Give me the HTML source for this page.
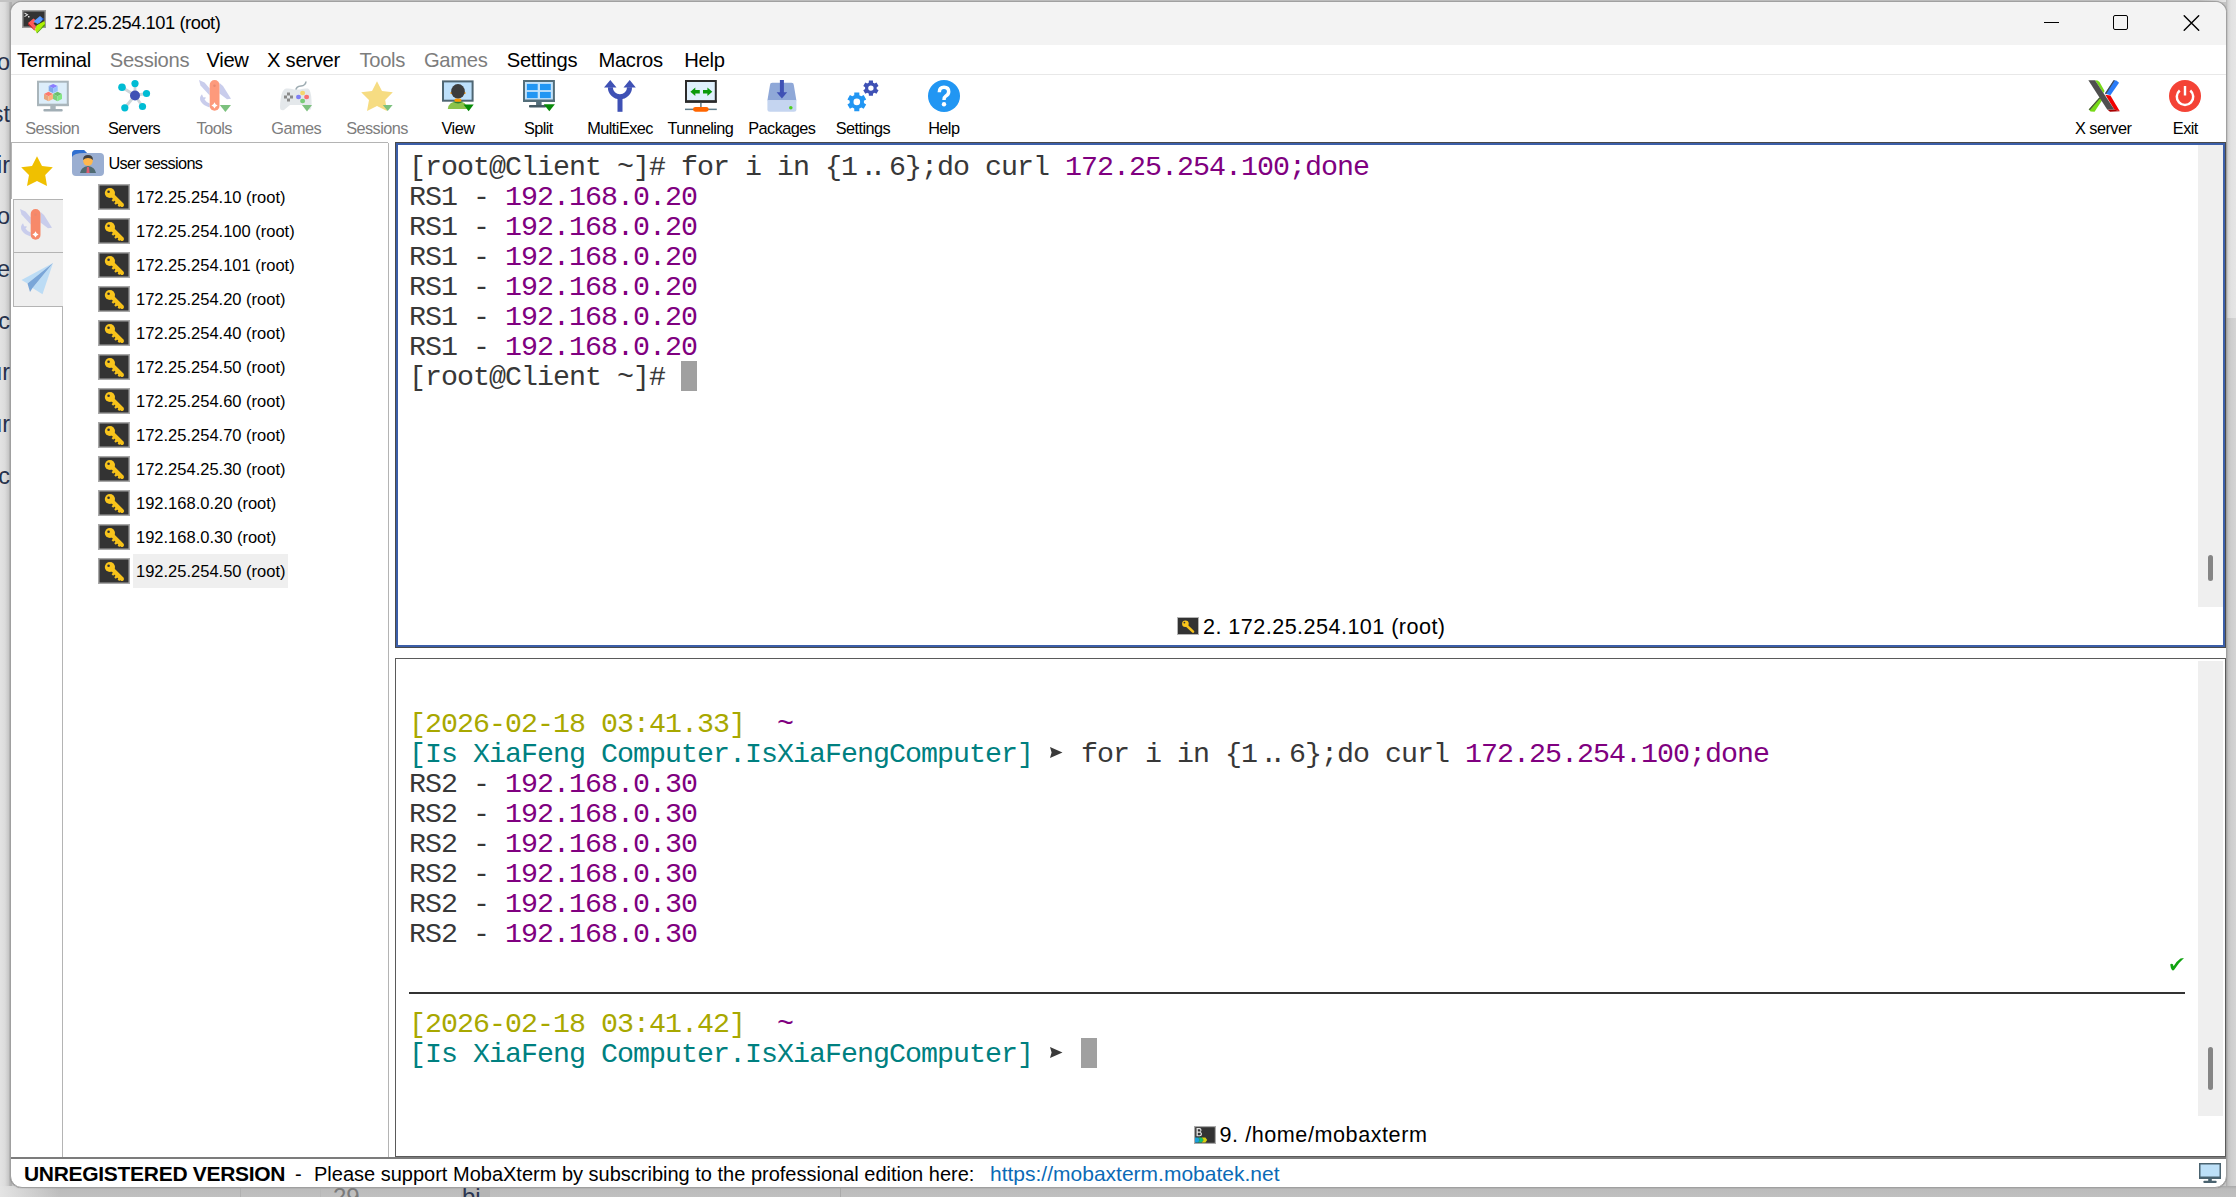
<!DOCTYPE html>
<html><head><meta charset="utf-8">
<style>
*{margin:0;padding:0;box-sizing:border-box}
html,body{width:2236px;height:1197px;overflow:hidden;background:#c4c4c4;font-family:"Liberation Sans",sans-serif;color:#000}
.a{position:absolute}
.t{position:absolute;white-space:pre;line-height:1}
svg{display:block}
</style></head><body>
<div class="a" style="left:0;top:0;width:12px;height:1197px;background:linear-gradient(to right,#e3e3e3 0px,#dcdcdc 5px,#c8c8c8 8.5px,#b0b0b0 10px)"></div>
<div class="a" style="left:0;top:0;width:2236px;height:2px;background:linear-gradient(to right,#c3c3c3 0px,#c3c3c3 2200px,#e6e6e6 2226px)"></div>
<div class="a" style="left:2226px;top:0;width:10px;height:318px;background:linear-gradient(to right,#b8b8b8 0px,#d4d4d4 2px,#e2e2e2 5px,#e6e6e6 10px)"></div>
<div class="a" style="left:2226px;top:318px;width:10px;height:879px;background:linear-gradient(to right,#a8a8a8 0px,#c0c0c0 2px,#cdcdcd 5px,#d4d4d4 10px)"></div>
<div class="a" style="left:0;top:1186px;width:2236px;height:11px;background:linear-gradient(to bottom,#a8a8a8 0px,#bcbcbc 3px,#c0c0c0 11px)"></div>
<div class="a" style="left:0;top:1186px;width:60px;height:11px;background:linear-gradient(to right,#e4e4e4,rgba(200,200,200,0))"></div>
<div class="a" style="left:240px;top:1188px;width:1px;height:9px;background:#b0b0b0;"></div>
<div class="a" style="left:320px;top:1188px;width:1px;height:9px;background:#b8b8b8;"></div>
<div class="a" style="left:840px;top:1188px;width:1px;height:9px;background:#aaaaaa;"></div>
<div class="a" style="left:461px;top:1188px;width:29px;height:9px;background:#b5b5b5;"></div>
<div class="t" style="left:10px;top:51.10px;font-size:23.5px;color:#26324c;font-weight:400;letter-spacing:0px;font-family:'Liberation Sans',sans-serif;transform:translateX(-100%);">o</div>
<div class="t" style="left:10px;top:103.10px;font-size:23.5px;color:#26324c;font-weight:400;letter-spacing:0px;font-family:'Liberation Sans',sans-serif;transform:translateX(-100%);">st</div>
<div class="t" style="left:10px;top:154.10px;font-size:23.5px;color:#26324c;font-weight:400;letter-spacing:0px;font-family:'Liberation Sans',sans-serif;transform:translateX(-100%);">ir</div>
<div class="t" style="left:10px;top:205.10px;font-size:23.5px;color:#26324c;font-weight:400;letter-spacing:0px;font-family:'Liberation Sans',sans-serif;transform:translateX(-100%);">o</div>
<div class="t" style="left:10px;top:258.10px;font-size:23.5px;color:#26324c;font-weight:400;letter-spacing:0px;font-family:'Liberation Sans',sans-serif;transform:translateX(-100%);">e</div>
<div class="t" style="left:10px;top:310.10px;font-size:23.5px;color:#26324c;font-weight:400;letter-spacing:0px;font-family:'Liberation Sans',sans-serif;transform:translateX(-100%);">sc</div>
<div class="t" style="left:10px;top:361.10px;font-size:23.5px;color:#26324c;font-weight:400;letter-spacing:0px;font-family:'Liberation Sans',sans-serif;transform:translateX(-100%);">ur</div>
<div class="t" style="left:10px;top:413.10px;font-size:23.5px;color:#26324c;font-weight:400;letter-spacing:0px;font-family:'Liberation Sans',sans-serif;transform:translateX(-100%);">ur</div>
<div class="t" style="left:10px;top:465.10px;font-size:23.5px;color:#26324c;font-weight:400;letter-spacing:0px;font-family:'Liberation Sans',sans-serif;transform:translateX(-100%);">nc</div>
<div class="t" style="left:333px;top:1185.18px;font-size:24px;color:#7a7a7a;font-weight:400;letter-spacing:0px;font-family:'Liberation Sans',sans-serif;">29</div>
<div class="t" style="left:462px;top:1185.18px;font-size:24px;color:#2a3550;font-weight:400;letter-spacing:0px;font-family:'Liberation Sans',sans-serif;">bi</div>
<div class="a" style="left:10px;top:1px;width:2217px;height:1187px;background:#fff;border:1px solid #a0a0a0;border-radius:12px;overflow:hidden;box-shadow:0 0 1px #777">
<div class="a" style="left:0;top:0;width:2215px;height:43px;background:#f3f3f3"></div>
</div>
<svg class="a" style="left:22px;top:10px;overflow:visible" width="24" height="24" viewBox="0 0 24 24">
<rect x="0.75" y="0.75" width="22.5" height="16.5" fill="#333" stroke="#9a9a9a" stroke-width="1.5"/>
<path d="M2.5 3 l3 1.8 l-3 1.8" stroke="#e0e0e0" stroke-width="1.1" fill="none"/><rect x="6" y="6" width="1.5" height="1.5" fill="#e0e0e0"/>
<path d="M6 13 L11.5 8.5 L14.5 11 L11.5 13.5 L14 16 L13 20 Z" fill="#ff5a5a"/>
<path d="M6 13 L6 14.5 L12.5 20.5 L13 20 Z" fill="#d01818"/>
<path d="M11.5 11.5 L18 6 L21.5 9 L18 12.5 L15.5 14 Z" fill="#5c9dff"/><path d="M19.5 8.5 l2 -0.5 l-0.5 2.5 z" fill="#1e5de0"/>
<path d="M13 20 L14.5 15.5 L17 14 L22.5 11 L23 14 L14.5 22.5 Z" fill="#b0f000"/>
<path d="M14.5 22.5 L23 14 L23 15.5 L15 23.5 Z" fill="#58b000"/>
</svg>
<div class="t" style="left:54px;top:13.81px;font-size:18.3px;color:#000;font-weight:400;letter-spacing:-0.45px;font-family:'Liberation Sans',sans-serif;">172.25.254.101 (root)</div>
<div class="a" style="left:2044px;top:22px;width:15px;height:1px;background:#000;"></div>
<div class="a" style="left:2113px;top:15px;width:15px;height:15px;border:1.3px solid #000;border-radius:2px"></div>
<svg class="a" style="left:2183px;top:15px;overflow:visible" width="17" height="16" viewBox="0 0 17 16"><path d="M1.2 0.8 L15.7 15.2 M15.7 0.8 L1.2 15.2" stroke="#000" stroke-width="1.45" stroke-linecap="round"/></svg>
<div class="a" style="left:11px;top:74px;width:2215px;height:1px;background:#e8e8e8;"></div>
<div class="t" style="left:54px;top:50.20px;font-size:20.2px;color:#000;font-weight:400;letter-spacing:-0.3px;font-family:'Liberation Sans',sans-serif;transform:translateX(-50%);">Terminal</div>
<div class="t" style="left:149.5px;top:50.20px;font-size:20.2px;color:#7d7d7d;font-weight:400;letter-spacing:-0.3px;font-family:'Liberation Sans',sans-serif;transform:translateX(-50%);">Sessions</div>
<div class="t" style="left:227.5px;top:50.20px;font-size:20.2px;color:#000;font-weight:400;letter-spacing:-0.3px;font-family:'Liberation Sans',sans-serif;transform:translateX(-50%);">View</div>
<div class="t" style="left:303.5px;top:50.20px;font-size:20.2px;color:#000;font-weight:400;letter-spacing:-0.3px;font-family:'Liberation Sans',sans-serif;transform:translateX(-50%);">X server</div>
<div class="t" style="left:382.3px;top:50.20px;font-size:20.2px;color:#7d7d7d;font-weight:400;letter-spacing:-0.3px;font-family:'Liberation Sans',sans-serif;transform:translateX(-50%);">Tools</div>
<div class="t" style="left:455.7px;top:50.20px;font-size:20.2px;color:#7d7d7d;font-weight:400;letter-spacing:-0.3px;font-family:'Liberation Sans',sans-serif;transform:translateX(-50%);">Games</div>
<div class="t" style="left:542px;top:50.20px;font-size:20.2px;color:#000;font-weight:400;letter-spacing:-0.3px;font-family:'Liberation Sans',sans-serif;transform:translateX(-50%);">Settings</div>
<div class="t" style="left:630.6px;top:50.20px;font-size:20.2px;color:#000;font-weight:400;letter-spacing:-0.3px;font-family:'Liberation Sans',sans-serif;transform:translateX(-50%);">Macros</div>
<div class="t" style="left:704.5px;top:50.20px;font-size:20.2px;color:#000;font-weight:400;letter-spacing:-0.3px;font-family:'Liberation Sans',sans-serif;transform:translateX(-50%);">Help</div>
<div class="a" style="left:11px;top:142px;width:377px;height:1px;background:#b4b4b4;"></div>
<div class="t" style="left:52.2px;top:120.10px;font-size:16.3px;color:#7d7d7d;font-weight:400;letter-spacing:-0.55px;font-family:'Liberation Sans',sans-serif;transform:translateX(-50%);">Session</div>
<div class="t" style="left:134px;top:120.10px;font-size:16.3px;color:#000;font-weight:400;letter-spacing:-0.55px;font-family:'Liberation Sans',sans-serif;transform:translateX(-50%);">Servers</div>
<div class="t" style="left:214.2px;top:120.10px;font-size:16.3px;color:#7d7d7d;font-weight:400;letter-spacing:-0.55px;font-family:'Liberation Sans',sans-serif;transform:translateX(-50%);">Tools</div>
<div class="t" style="left:296.2px;top:120.10px;font-size:16.3px;color:#7d7d7d;font-weight:400;letter-spacing:-0.55px;font-family:'Liberation Sans',sans-serif;transform:translateX(-50%);">Games</div>
<div class="t" style="left:377px;top:120.10px;font-size:16.3px;color:#7d7d7d;font-weight:400;letter-spacing:-0.55px;font-family:'Liberation Sans',sans-serif;transform:translateX(-50%);">Sessions</div>
<div class="t" style="left:458px;top:120.10px;font-size:16.3px;color:#000;font-weight:400;letter-spacing:-0.55px;font-family:'Liberation Sans',sans-serif;transform:translateX(-50%);">View</div>
<div class="t" style="left:538.4px;top:120.10px;font-size:16.3px;color:#000;font-weight:400;letter-spacing:-0.55px;font-family:'Liberation Sans',sans-serif;transform:translateX(-50%);">Split</div>
<div class="t" style="left:620.1px;top:120.10px;font-size:16.3px;color:#000;font-weight:400;letter-spacing:-0.55px;font-family:'Liberation Sans',sans-serif;transform:translateX(-50%);">MultiExec</div>
<div class="t" style="left:700.4px;top:120.10px;font-size:16.3px;color:#000;font-weight:400;letter-spacing:-0.55px;font-family:'Liberation Sans',sans-serif;transform:translateX(-50%);">Tunneling</div>
<div class="t" style="left:781.8px;top:120.10px;font-size:16.3px;color:#000;font-weight:400;letter-spacing:-0.55px;font-family:'Liberation Sans',sans-serif;transform:translateX(-50%);">Packages</div>
<div class="t" style="left:863px;top:120.10px;font-size:16.3px;color:#000;font-weight:400;letter-spacing:-0.55px;font-family:'Liberation Sans',sans-serif;transform:translateX(-50%);">Settings</div>
<div class="t" style="left:943.8px;top:120.10px;font-size:16.3px;color:#000;font-weight:400;letter-spacing:-0.55px;font-family:'Liberation Sans',sans-serif;transform:translateX(-50%);">Help</div>
<div class="t" style="left:2103.2px;top:120.10px;font-size:16.3px;color:#000;font-weight:400;letter-spacing:-0.55px;font-family:'Liberation Sans',sans-serif;transform:translateX(-50%);">X server</div>
<div class="t" style="left:2185.3px;top:120.10px;font-size:16.3px;color:#000;font-weight:400;letter-spacing:-0.55px;font-family:'Liberation Sans',sans-serif;transform:translateX(-50%);">Exit</div>
<svg class="a" style="left:37px;top:80px;overflow:visible" width="32" height="32" viewBox="0 0 32 32">
<rect x="1" y="1.7" width="29.8" height="23.4" fill="#ddeefa" stroke="#a9b5bb" stroke-width="2"/><rect x="0" y="23.7" width="31.8" height="2.4" fill="#a9b5bb"/><rect x="13.3" y="26" width="5.4" height="3" fill="#a9b5bb"/><rect x="6.4" y="29" width="19.3" height="2.5" rx="1" fill="#a1aeb5"/><path d="M11.7 6.1 L16.2 3.9 L20.7 6.1 L16.2 8.3 Z" fill="#8a7dff"/><path d="M11.7 6.1 L16.2 8.3 L16.2 13.3 L11.7 11.100000000000001 Z" fill="#7fa8ea"/><path d="M16.2 8.3 L20.7 6.1 L20.7 11.100000000000001 L16.2 13.3 Z" fill="#98c0ff"/><path d="M7 14.0 L11.5 11.8 L16 14.0 L11.5 16.200000000000003 Z" fill="#ff7a6e"/><path d="M7 14.0 L11.5 16.200000000000003 L11.5 21.200000000000003 L7 19.000000000000004 Z" fill="#e8a67e"/><path d="M11.5 16.200000000000003 L16 14.0 L16 19.000000000000004 L11.5 21.200000000000003 Z" fill="#ffb37e"/><path d="M16 14.0 L20.5 11.8 L25 14.0 L20.5 16.200000000000003 Z" fill="#6cbf6c"/><path d="M16 14.0 L20.5 16.200000000000003 L20.5 21.200000000000003 L16 19.000000000000004 Z" fill="#7ccf7c"/><path d="M20.5 16.200000000000003 L25 14.0 L25 19.000000000000004 L20.5 21.200000000000003 Z" fill="#84e884"/>
</svg>
<svg class="a" style="left:118px;top:80px;overflow:visible" width="32" height="32" viewBox="0 0 32 32">
<g stroke="#cfd6da" stroke-width="2.8"><line x1="17" y1="15.5" x2="4" y2="7.3"/><line x1="17" y1="15.5" x2="17" y2="3.5"/><line x1="17" y1="15.5" x2="28" y2="13.5"/><line x1="17" y1="15.5" x2="7" y2="27.5"/><line x1="17" y1="15.5" x2="24.5" y2="26.5"/></g>
<circle cx="17" cy="15.5" r="5" fill="#3f51b5"/>
<g fill="#00bcd4"><circle cx="4" cy="7.3" r="3.8"/><circle cx="17" cy="3.6" r="3.6"/><circle cx="28.5" cy="13.5" r="3.6"/><circle cx="6.8" cy="27.8" r="3.6"/><circle cx="24.5" cy="26.5" r="3.6"/></g>
</svg>
<svg class="a" style="left:198px;top:80px;overflow:visible" width="32" height="32" viewBox="0 0 32 32">
<path d="M1 0 L6.5 2.5 L11.7 8.5 L11.7 15.5 L2.5 5.5 Z" fill="#c9cdec"/>
<path d="M21.5 3 L25 6 L33 18.7 L29 19.2 L21.5 13.5 Z" fill="#c9cdec"/>
<path d="M4 14.2 Q1 17 2.5 21 Q5 25.5 11.7 27.5 L11.7 23.5 Q7.5 21.5 6.5 19.5 Q8 18.5 7.5 17 Q5.5 18 5 16.8 Z" fill="#c9cdec"/>
<rect x="11.7" y="0" width="9.8" height="30.8" rx="4.9" fill="#fd9a7c"/>
<circle cx="16.5" cy="5.7" r="1.2" fill="#e88a70"/>
<path d="M16.5 22.3 Q17.2 24.7 19.6 25.4 Q17.2 26.1 16.5 28.5 Q15.8 26.1 13.4 25.4 Q15.8 24.7 16.5 22.3 Z" fill="#fff"/>
<path d="M21.8 25 h11.2 l-5.6 7 z" fill="#7cc17e"/></svg>
<svg class="a" style="left:280px;top:80px;overflow:visible" width="32" height="32" viewBox="0 0 32 32">
<path d="M16 10 Q16 6.5 21 6 Q25.5 5.5 26 1.5" stroke="#9eacb2" stroke-width="1.6" fill="none"/>
<path d="M6 8.5 Q10 8 14 9.5 H20 Q24 8 28 8.5 Q31 10 31.5 20 Q32 29 30 30 L22 25 H10 L4 30 Q0 31 0 27 Q0.5 10 6 8.5 Z" fill="#e4e8eb"/>
<g fill="#8a8a8a"><rect x="7" y="12.5" width="3" height="3"/><rect x="4" y="15.5" width="3" height="3"/><rect x="10" y="15.5" width="3" height="3"/><rect x="7" y="18.5" width="3" height="3"/></g>
<ellipse cx="22.6" cy="13" rx="2.5" ry="2.2" fill="#f5d76e"/><ellipse cx="18.5" cy="17" rx="2.5" ry="2.2" fill="#7f7ff5"/>
<ellipse cx="26.6" cy="17" rx="2.5" ry="2.2" fill="#f87272"/><ellipse cx="22.6" cy="21" rx="2.5" ry="2.2" fill="#78cc78"/>
<path d="M22 25 h10 l-5 6.5 z" fill="#7cc17e"/>
</svg>
<svg class="a" style="left:361px;top:80px;overflow:visible" width="32" height="32" viewBox="0 0 32 32"><path d="M16 1.2 L21 11 L31.8 12.2 L24.2 20 L26 31 L16 26 L6 31 L8 20 L0.2 12.2 L11 11 Z" fill="#f6dc82"/><path d="M21.8 25 h9.8 l-4.9 6 z" fill="#7cc17e"/></svg>
<svg class="a" style="left:442px;top:80px;overflow:visible" width="32" height="32" viewBox="0 0 32 32">
<rect x="1" y="1.4" width="29.6" height="19.3" fill="#bde0fb" stroke="#4f6673" stroke-width="2"/>
<path d="M5.8 29 Q6.5 21.5 16 21 Q25 21.5 25 29 Z" fill="#8bc34a"/>
<path d="M11 21.8 Q16 25 21 21.8 Q16 20.5 11 21.8 Z" fill="#2e7d32"/>
<rect x="12.5" y="18.5" width="6.8" height="3.2" rx="1.5" fill="#ff9800"/>
<circle cx="9.3" cy="13" r="1" fill="#ff9800"/><circle cx="22.7" cy="13" r="1" fill="#ff9800"/>
<ellipse cx="16" cy="11.3" rx="6.8" ry="7.3" fill="#3c3c3c"/>
<path d="M21.5 24.5 h10.2 l-5.1 6.7 z" fill="#078c07"/>
</svg>
<svg class="a" style="left:523px;top:80px;overflow:visible" width="32" height="32" viewBox="0 0 32 32">
<rect x="1" y="1" width="29.9" height="20" fill="#c3e3fb" stroke="#546e7a" stroke-width="2"/>
<rect x="0" y="19.5" width="31.9" height="2.5" fill="#546e7a"/>
<g fill="#2196f3"><rect x="3.9" y="3.9" width="10.8" height="6.2"/><rect x="17" y="3.9" width="10.8" height="6.2"/><rect x="3.9" y="11.9" width="10.8" height="6.2"/><rect x="17" y="11.9" width="10.8" height="6.2"/></g>
<rect x="13.1" y="22" width="5.5" height="3.2" fill="#546e7a"/><rect x="6" y="25" width="17" height="2.6" rx="0.8" fill="#455a64"/>
<path d="M20.7 24.2 h11.2 l-5.6 7.1 z" fill="#098a09"/>
</svg>
<svg class="a" style="left:604px;top:80px;overflow:visible" width="32" height="32" viewBox="0 0 32 32">
<path d="M6.35 7.2 A9.6 9.6 0 0 0 25.55 7.2" stroke="#3f51b5" stroke-width="5" fill="none"/>
<rect x="13.5" y="16" width="5" height="15.8" fill="#3f51b5"/>
<path d="M0 7.6 L6.3 0 L12.5 7.6 Z M19.5 7.6 L25.7 0 L31.8 7.6 Z" fill="#3f51b5"/>
</svg>
<svg class="a" style="left:685px;top:80px;overflow:visible" width="32" height="32" viewBox="0 0 32 32">
<rect x="1" y="1" width="29.8" height="20.5" fill="#dff0fc" stroke="#2b2b2b" stroke-width="2"/>
<rect x="0" y="20.3" width="31.8" height="2.5" fill="#2b2b2b"/>
<path d="M5.4 11.65 L10.3 7.4 V9.9 H14.8 V13.4 H10.3 V15.9 Z" fill="#0a9a0a"/>
<path d="M27.3 11.65 L22.4 7.4 V9.9 H18 V13.4 H22.4 V15.9 Z" fill="#0a9a0a"/>
<rect x="15.2" y="22.8" width="1.4" height="4.2" fill="#546e7a"/>
<rect x="0" y="28.6" width="31.8" height="1.5" fill="#607d8b"/>
<rect x="8" y="26.9" width="15.7" height="4.9" rx="2.45" fill="#ff6600"/>
</svg>
<svg class="a" style="left:767px;top:80px;overflow:visible" width="32" height="32" viewBox="0 0 32 32">
<path d="M3 5 Q3 2.7 5.3 2.7 H24.5 Q26.8 2.7 26.8 5 L29.4 20.4 H0.4 Z" fill="#8fa8d8"/>
<path d="M0.4 20.2 H29.4 V29.3 Q29.4 31.8 26.9 31.8 H2.9 Q0.4 31.8 0.4 29.3 Z" fill="#c5d5f0"/>
<circle cx="23.8" cy="27.7" r="1.8" fill="#50d020"/>
<rect x="12.9" y="0" width="4" height="13" fill="#3f51b5"/><path d="M9.6 12.3 H20.2 L14.9 18.4 Z" fill="#3f51b5"/>
</svg>
<svg class="a" style="left:847px;top:80px;overflow:visible" width="32" height="32" viewBox="0 0 32 32"><polygon points="16.89,23.02 19.17,24.41 16.66,28.76 14.32,27.48 13.39,28.12 12.37,28.60 12.31,31.27 7.29,31.27 7.23,28.60 6.21,28.12 5.28,27.48 2.94,28.76 0.43,24.41 2.71,23.02 2.62,21.90 2.71,20.78 0.43,19.39 2.94,15.04 5.28,16.32 6.21,15.68 7.23,15.20 7.29,12.53 12.31,12.53 12.37,15.20 13.39,15.68 14.32,16.32 16.66,15.04 19.17,19.39 16.89,20.78 16.98,21.90" fill="#2196f3"/><circle cx="9.8" cy="21.9" r="3.3" fill="#fff"/><polygon points="29.67,9.01 31.53,10.14 29.49,13.69 27.58,12.64 26.82,13.16 26.00,13.56 25.94,15.73 21.86,15.73 21.80,13.56 20.98,13.16 20.22,12.64 18.31,13.69 16.27,10.14 18.13,9.01 18.05,8.10 18.13,7.19 16.27,6.06 18.31,2.51 20.22,3.56 20.98,3.04 21.80,2.64 21.86,0.47 25.94,0.47 26.00,2.64 26.82,3.04 27.58,3.56 29.49,2.51 31.53,6.06 29.67,7.19 29.75,8.10" fill="#3f51b5"/><circle cx="23.9" cy="8.1" r="2.7" fill="#fff"/></svg>
<svg class="a" style="left:928px;top:80px;overflow:visible" width="32" height="32" viewBox="0 0 32 32">
<circle cx="16" cy="16" r="16" fill="#2196f3"/>
<path d="M11.3 12.3 Q11.3 7.3 16 7.3 Q20.7 7.3 20.7 11.8 Q20.7 14.6 17.6 16.2 Q16 17.2 16 20" stroke="#fff" stroke-width="3.5" fill="none"/>
<circle cx="16" cy="24.3" r="2.2" fill="#fff"/>
</svg>
<svg class="a" style="left:2088px;top:80px;overflow:visible" width="32" height="32" viewBox="0 0 32 32">
<path d="M0.7 29.4 L11.4 17.6 L14.9 19.1 L6.6 31.7 L2.6 31.4 Z" fill="#77d918"/>
<path d="M0.7 29.4 L11.4 17.6 L12.4 18 L2 30 Z" fill="#4a4a4a"/>
<path d="M25.6 0.24 L28.3 0.6 L31.05 2.8 L22.4 15.2 L16.9 13.6 Z" fill="#2a7cf8"/>
<path d="M25.6 0.24 L26.9 0.3 L18.2 14 L16.9 13.6 Z" fill="#4a4a4a"/>
<path d="M17.3 14.8 L22.4 15.6 L31.8 31.3 L26.3 29.4 Z" fill="#f00000"/>
<path d="M19.2 29.4 L26.3 29.4 L31.8 31.3 L22 31.8 Z" fill="#a80000"/>
<path d="M7 0.24 L9.5 0.6 L11.5 2 L16.6 11 L15.3 13 Z" fill="#77d918"/>
<path d="M0.35 0.24 L7 0.24 L26.3 29.4 L19.2 29.4 Z" fill="#4f4f4f"/>
</svg>
<svg class="a" style="left:2169px;top:80px;overflow:visible" width="32" height="32" viewBox="0 0 32 32">
<circle cx="16" cy="16" r="16" fill="#f44336"/>
<path d="M10.73 10.52 A8.2 8.2 0 1 0 21.27 10.52" stroke="#fff" stroke-width="2.5" fill="none"/>
<rect x="14.8" y="6" width="2.4" height="9.5" fill="#fff"/>
</svg>
<div class="a" style="left:11px;top:143px;width:1px;height:56px;background:#b4b4b4;"></div>
<div class="a" style="left:62px;top:199px;width:1px;height:958px;background:#b4b4b4;"></div>
<svg class="a" style="left:21px;top:155px;overflow:visible" width="32" height="32" viewBox="0 0 32 32"><path d="M16 1.2 L21 11 L31.8 12.2 L24.2 20 L26 31 L16 26 L6 31 L8 20 L0.2 12.2 L11 11 Z" fill="#f0c000"/></svg>
<div class="a" style="left:13px;top:199px;width:50px;height:54px;background:#efefef;border:1px solid #b4b4b4;border-right:none"></div>
<div class="a" style="left:13px;top:252px;width:50px;height:55px;background:#efefef;border:1px solid #b4b4b4;border-right:none"></div>
<svg class="a" style="left:19px;top:209px;overflow:visible" width="32" height="32" viewBox="0 0 32 32">
<path d="M1 0 L6.5 2.5 L11.7 8.5 L11.7 15.5 L2.5 5.5 Z" fill="#c9cdec"/>
<path d="M21.5 3 L25 6 L33 18.7 L29 19.2 L21.5 13.5 Z" fill="#c9cdec"/>
<path d="M4 14.2 Q1 17 2.5 21 Q5 25.5 11.7 27.5 L11.7 23.5 Q7.5 21.5 6.5 19.5 Q8 18.5 7.5 17 Q5.5 18 5 16.8 Z" fill="#c9cdec"/>
<rect x="11.7" y="0" width="9.8" height="30.8" rx="4.9" fill="#f7896a"/>
<circle cx="16.5" cy="5.7" r="1.2" fill="#e88a70"/>
<path d="M16.5 22.3 Q17.2 24.7 19.6 25.4 Q17.2 26.1 16.5 28.5 Q15.8 26.1 13.4 25.4 Q15.8 24.7 16.5 22.3 Z" fill="#fff"/>
</svg>
<svg class="a" style="left:21px;top:263px;overflow:visible" width="32" height="32" viewBox="0 0 32 32">
<path d="M0.5 17 L32 0 L6.5 20.5 Z" fill="#bcdcf5"/>
<path d="M32 0 L21.5 31.3 L11.5 25 Z" fill="#bcdcf5"/>
<path d="M6.5 20.5 L32 0 L11.5 25 L9 29 Z" fill="#7aa6d8"/>
</svg>
<div class="a" style="left:388px;top:143px;width:1px;height:1014px;background:#b4b4b4;"></div>
<svg class="a" style="left:72px;top:150px;overflow:visible" width="32" height="26" viewBox="0 0 32 26">
<path d="M0 4 Q0 0 4 0 H12 L15 3 H28 Q32 3 32 7 V22 Q32 26 28 26 H4 Q0 26 0 22 Z" fill="#9aaed1"/>
<path d="M0 4 Q0 0 4 0 H12 L15 3 H12 Q2 3 0 7 Z" fill="#2f6fd0"/>
<path d="M8 23 Q9 17 16 16 Q23 17 24 23 Z" fill="#4f6b72"/>
<path d="M15 17 h2 l0.6 6 h-3.2 z" fill="#e05a6e"/>
<circle cx="16" cy="11" r="4.8" fill="#ffb74d"/>
<path d="M11 10 Q11 5 16 5 Q21 5 21 10 Q19 8 16 8 Q13 8 11 10 Z" fill="#424242"/>
</svg>
<div class="t" style="left:108.5px;top:155.20px;font-size:16.3px;color:#000;font-weight:400;letter-spacing:-0.65px;font-family:'Liberation Sans',sans-serif;">User sessions</div>
<svg class="a" style="left:98px;top:184px;overflow:visible" width="32" height="26" viewBox="0 0 32 26"><rect x="0.75" y="0.75" width="30.5" height="24.5" fill="#333" stroke="#a8a8a8" stroke-width="1.5"/>
<path d="M12 9 L24 21" stroke="#f7c21a" stroke-width="4" stroke-linecap="round"/>
<circle cx="11.9" cy="9" r="5.1" fill="#f9c51c"/><circle cx="10.6" cy="7.8" r="1.3" fill="#333"/>
<path d="M15.2 14.6 L13.6 16.2 L15.2 17.8 L16.4 16.6 L17.6 17.8 L16.2 19.2 L17.8 20.8 L19.2 19.4 L20.4 20.6 L19.6 21.6 L21.2 23 L24 20.4 Z" fill="#f7c21a"/></svg>
<div class="t" style="left:136px;top:189.03px;font-size:16.5px;color:#000;font-weight:400;letter-spacing:0px;font-family:'Liberation Sans',sans-serif;">172.25.254.10 (root)</div>
<svg class="a" style="left:98px;top:218px;overflow:visible" width="32" height="26" viewBox="0 0 32 26"><rect x="0.75" y="0.75" width="30.5" height="24.5" fill="#333" stroke="#a8a8a8" stroke-width="1.5"/>
<path d="M12 9 L24 21" stroke="#f7c21a" stroke-width="4" stroke-linecap="round"/>
<circle cx="11.9" cy="9" r="5.1" fill="#f9c51c"/><circle cx="10.6" cy="7.8" r="1.3" fill="#333"/>
<path d="M15.2 14.6 L13.6 16.2 L15.2 17.8 L16.4 16.6 L17.6 17.8 L16.2 19.2 L17.8 20.8 L19.2 19.4 L20.4 20.6 L19.6 21.6 L21.2 23 L24 20.4 Z" fill="#f7c21a"/></svg>
<div class="t" style="left:136px;top:223.03px;font-size:16.5px;color:#000;font-weight:400;letter-spacing:0px;font-family:'Liberation Sans',sans-serif;">172.25.254.100 (root)</div>
<svg class="a" style="left:98px;top:252px;overflow:visible" width="32" height="26" viewBox="0 0 32 26"><rect x="0.75" y="0.75" width="30.5" height="24.5" fill="#333" stroke="#a8a8a8" stroke-width="1.5"/>
<path d="M12 9 L24 21" stroke="#f7c21a" stroke-width="4" stroke-linecap="round"/>
<circle cx="11.9" cy="9" r="5.1" fill="#f9c51c"/><circle cx="10.6" cy="7.8" r="1.3" fill="#333"/>
<path d="M15.2 14.6 L13.6 16.2 L15.2 17.8 L16.4 16.6 L17.6 17.8 L16.2 19.2 L17.8 20.8 L19.2 19.4 L20.4 20.6 L19.6 21.6 L21.2 23 L24 20.4 Z" fill="#f7c21a"/></svg>
<div class="t" style="left:136px;top:257.03px;font-size:16.5px;color:#000;font-weight:400;letter-spacing:0px;font-family:'Liberation Sans',sans-serif;">172.25.254.101 (root)</div>
<svg class="a" style="left:98px;top:286px;overflow:visible" width="32" height="26" viewBox="0 0 32 26"><rect x="0.75" y="0.75" width="30.5" height="24.5" fill="#333" stroke="#a8a8a8" stroke-width="1.5"/>
<path d="M12 9 L24 21" stroke="#f7c21a" stroke-width="4" stroke-linecap="round"/>
<circle cx="11.9" cy="9" r="5.1" fill="#f9c51c"/><circle cx="10.6" cy="7.8" r="1.3" fill="#333"/>
<path d="M15.2 14.6 L13.6 16.2 L15.2 17.8 L16.4 16.6 L17.6 17.8 L16.2 19.2 L17.8 20.8 L19.2 19.4 L20.4 20.6 L19.6 21.6 L21.2 23 L24 20.4 Z" fill="#f7c21a"/></svg>
<div class="t" style="left:136px;top:291.03px;font-size:16.5px;color:#000;font-weight:400;letter-spacing:0px;font-family:'Liberation Sans',sans-serif;">172.25.254.20 (root)</div>
<svg class="a" style="left:98px;top:320px;overflow:visible" width="32" height="26" viewBox="0 0 32 26"><rect x="0.75" y="0.75" width="30.5" height="24.5" fill="#333" stroke="#a8a8a8" stroke-width="1.5"/>
<path d="M12 9 L24 21" stroke="#f7c21a" stroke-width="4" stroke-linecap="round"/>
<circle cx="11.9" cy="9" r="5.1" fill="#f9c51c"/><circle cx="10.6" cy="7.8" r="1.3" fill="#333"/>
<path d="M15.2 14.6 L13.6 16.2 L15.2 17.8 L16.4 16.6 L17.6 17.8 L16.2 19.2 L17.8 20.8 L19.2 19.4 L20.4 20.6 L19.6 21.6 L21.2 23 L24 20.4 Z" fill="#f7c21a"/></svg>
<div class="t" style="left:136px;top:325.03px;font-size:16.5px;color:#000;font-weight:400;letter-spacing:0px;font-family:'Liberation Sans',sans-serif;">172.25.254.40 (root)</div>
<svg class="a" style="left:98px;top:354px;overflow:visible" width="32" height="26" viewBox="0 0 32 26"><rect x="0.75" y="0.75" width="30.5" height="24.5" fill="#333" stroke="#a8a8a8" stroke-width="1.5"/>
<path d="M12 9 L24 21" stroke="#f7c21a" stroke-width="4" stroke-linecap="round"/>
<circle cx="11.9" cy="9" r="5.1" fill="#f9c51c"/><circle cx="10.6" cy="7.8" r="1.3" fill="#333"/>
<path d="M15.2 14.6 L13.6 16.2 L15.2 17.8 L16.4 16.6 L17.6 17.8 L16.2 19.2 L17.8 20.8 L19.2 19.4 L20.4 20.6 L19.6 21.6 L21.2 23 L24 20.4 Z" fill="#f7c21a"/></svg>
<div class="t" style="left:136px;top:359.03px;font-size:16.5px;color:#000;font-weight:400;letter-spacing:0px;font-family:'Liberation Sans',sans-serif;">172.25.254.50 (root)</div>
<svg class="a" style="left:98px;top:388px;overflow:visible" width="32" height="26" viewBox="0 0 32 26"><rect x="0.75" y="0.75" width="30.5" height="24.5" fill="#333" stroke="#a8a8a8" stroke-width="1.5"/>
<path d="M12 9 L24 21" stroke="#f7c21a" stroke-width="4" stroke-linecap="round"/>
<circle cx="11.9" cy="9" r="5.1" fill="#f9c51c"/><circle cx="10.6" cy="7.8" r="1.3" fill="#333"/>
<path d="M15.2 14.6 L13.6 16.2 L15.2 17.8 L16.4 16.6 L17.6 17.8 L16.2 19.2 L17.8 20.8 L19.2 19.4 L20.4 20.6 L19.6 21.6 L21.2 23 L24 20.4 Z" fill="#f7c21a"/></svg>
<div class="t" style="left:136px;top:393.03px;font-size:16.5px;color:#000;font-weight:400;letter-spacing:0px;font-family:'Liberation Sans',sans-serif;">172.25.254.60 (root)</div>
<svg class="a" style="left:98px;top:422px;overflow:visible" width="32" height="26" viewBox="0 0 32 26"><rect x="0.75" y="0.75" width="30.5" height="24.5" fill="#333" stroke="#a8a8a8" stroke-width="1.5"/>
<path d="M12 9 L24 21" stroke="#f7c21a" stroke-width="4" stroke-linecap="round"/>
<circle cx="11.9" cy="9" r="5.1" fill="#f9c51c"/><circle cx="10.6" cy="7.8" r="1.3" fill="#333"/>
<path d="M15.2 14.6 L13.6 16.2 L15.2 17.8 L16.4 16.6 L17.6 17.8 L16.2 19.2 L17.8 20.8 L19.2 19.4 L20.4 20.6 L19.6 21.6 L21.2 23 L24 20.4 Z" fill="#f7c21a"/></svg>
<div class="t" style="left:136px;top:427.03px;font-size:16.5px;color:#000;font-weight:400;letter-spacing:0px;font-family:'Liberation Sans',sans-serif;">172.25.254.70 (root)</div>
<svg class="a" style="left:98px;top:456px;overflow:visible" width="32" height="26" viewBox="0 0 32 26"><rect x="0.75" y="0.75" width="30.5" height="24.5" fill="#333" stroke="#a8a8a8" stroke-width="1.5"/>
<path d="M12 9 L24 21" stroke="#f7c21a" stroke-width="4" stroke-linecap="round"/>
<circle cx="11.9" cy="9" r="5.1" fill="#f9c51c"/><circle cx="10.6" cy="7.8" r="1.3" fill="#333"/>
<path d="M15.2 14.6 L13.6 16.2 L15.2 17.8 L16.4 16.6 L17.6 17.8 L16.2 19.2 L17.8 20.8 L19.2 19.4 L20.4 20.6 L19.6 21.6 L21.2 23 L24 20.4 Z" fill="#f7c21a"/></svg>
<div class="t" style="left:136px;top:461.03px;font-size:16.5px;color:#000;font-weight:400;letter-spacing:0px;font-family:'Liberation Sans',sans-serif;">172.254.25.30 (root)</div>
<svg class="a" style="left:98px;top:490px;overflow:visible" width="32" height="26" viewBox="0 0 32 26"><rect x="0.75" y="0.75" width="30.5" height="24.5" fill="#333" stroke="#a8a8a8" stroke-width="1.5"/>
<path d="M12 9 L24 21" stroke="#f7c21a" stroke-width="4" stroke-linecap="round"/>
<circle cx="11.9" cy="9" r="5.1" fill="#f9c51c"/><circle cx="10.6" cy="7.8" r="1.3" fill="#333"/>
<path d="M15.2 14.6 L13.6 16.2 L15.2 17.8 L16.4 16.6 L17.6 17.8 L16.2 19.2 L17.8 20.8 L19.2 19.4 L20.4 20.6 L19.6 21.6 L21.2 23 L24 20.4 Z" fill="#f7c21a"/></svg>
<div class="t" style="left:136px;top:495.03px;font-size:16.5px;color:#000;font-weight:400;letter-spacing:0px;font-family:'Liberation Sans',sans-serif;">192.168.0.20 (root)</div>
<svg class="a" style="left:98px;top:524px;overflow:visible" width="32" height="26" viewBox="0 0 32 26"><rect x="0.75" y="0.75" width="30.5" height="24.5" fill="#333" stroke="#a8a8a8" stroke-width="1.5"/>
<path d="M12 9 L24 21" stroke="#f7c21a" stroke-width="4" stroke-linecap="round"/>
<circle cx="11.9" cy="9" r="5.1" fill="#f9c51c"/><circle cx="10.6" cy="7.8" r="1.3" fill="#333"/>
<path d="M15.2 14.6 L13.6 16.2 L15.2 17.8 L16.4 16.6 L17.6 17.8 L16.2 19.2 L17.8 20.8 L19.2 19.4 L20.4 20.6 L19.6 21.6 L21.2 23 L24 20.4 Z" fill="#f7c21a"/></svg>
<div class="t" style="left:136px;top:529.03px;font-size:16.5px;color:#000;font-weight:400;letter-spacing:0px;font-family:'Liberation Sans',sans-serif;">192.168.0.30 (root)</div>
<div class="a" style="left:133px;top:554px;width:155px;height:34px;background:#efefef;"></div>
<svg class="a" style="left:98px;top:558px;overflow:visible" width="32" height="26" viewBox="0 0 32 26"><rect x="0.75" y="0.75" width="30.5" height="24.5" fill="#333" stroke="#a8a8a8" stroke-width="1.5"/>
<path d="M12 9 L24 21" stroke="#f7c21a" stroke-width="4" stroke-linecap="round"/>
<circle cx="11.9" cy="9" r="5.1" fill="#f9c51c"/><circle cx="10.6" cy="7.8" r="1.3" fill="#333"/>
<path d="M15.2 14.6 L13.6 16.2 L15.2 17.8 L16.4 16.6 L17.6 17.8 L16.2 19.2 L17.8 20.8 L19.2 19.4 L20.4 20.6 L19.6 21.6 L21.2 23 L24 20.4 Z" fill="#f7c21a"/></svg>
<div class="t" style="left:136px;top:563.03px;font-size:16.5px;color:#000;font-weight:400;letter-spacing:0px;font-family:'Liberation Sans',sans-serif;">192.25.254.50 (root)</div>
<div class="a" style="left:395px;top:142px;width:1831px;height:506px;border:1px solid #4a4a4a"></div>
<div class="a" style="left:396px;top:143px;width:1829px;height:504px;border:2px solid #3b5ea8"></div>
<div class="a" style="left:2198px;top:145px;width:25px;height:462px;background:#efefef;"></div>
<div class="a" style="left:2208px;top:555px;width:5px;height:26px;background:#858585;border-radius:3px"></div>
<div class="t" style="left:409px;top:153.32px;font-size:28.3px;color:#000;font-weight:400;letter-spacing:-0.9825px;font-family:'Liberation Mono',monospace;"><span style="color:#383838">[root@Client ~]# for i in {1<span style='position:relative;left:3.3px'>.</span><span style='position:relative;left:-3.6px'>.</span>6};do curl </span><span style="color:#800080">172.25.254.100;done</span></div>
<div class="t" style="left:409px;top:183.32px;font-size:28.3px;color:#000;font-weight:400;letter-spacing:-0.9825px;font-family:'Liberation Mono',monospace;"><span style="color:#383838">RS1 - </span><span style="color:#800080">192.168.0.20</span></div>
<div class="t" style="left:409px;top:213.32px;font-size:28.3px;color:#000;font-weight:400;letter-spacing:-0.9825px;font-family:'Liberation Mono',monospace;"><span style="color:#383838">RS1 - </span><span style="color:#800080">192.168.0.20</span></div>
<div class="t" style="left:409px;top:243.32px;font-size:28.3px;color:#000;font-weight:400;letter-spacing:-0.9825px;font-family:'Liberation Mono',monospace;"><span style="color:#383838">RS1 - </span><span style="color:#800080">192.168.0.20</span></div>
<div class="t" style="left:409px;top:273.32px;font-size:28.3px;color:#000;font-weight:400;letter-spacing:-0.9825px;font-family:'Liberation Mono',monospace;"><span style="color:#383838">RS1 - </span><span style="color:#800080">192.168.0.20</span></div>
<div class="t" style="left:409px;top:303.32px;font-size:28.3px;color:#000;font-weight:400;letter-spacing:-0.9825px;font-family:'Liberation Mono',monospace;"><span style="color:#383838">RS1 - </span><span style="color:#800080">192.168.0.20</span></div>
<div class="t" style="left:409px;top:333.32px;font-size:28.3px;color:#000;font-weight:400;letter-spacing:-0.9825px;font-family:'Liberation Mono',monospace;"><span style="color:#383838">RS1 - </span><span style="color:#800080">192.168.0.20</span></div>
<div class="t" style="left:409px;top:363.32px;font-size:28.3px;color:#000;font-weight:400;letter-spacing:-0.9825px;font-family:'Liberation Mono',monospace;"><span style="color:#383838">[root@Client ~]# </span></div>
<div class="a" style="left:681px;top:361px;width:16px;height:30px;background:#a0a0a0;"></div>
<svg class="a" style="left:1177px;top:617px;overflow:visible" width="22" height="18" viewBox="0 0 22 18"><rect x="0.5" y="0.5" width="21" height="17" fill="#333" stroke="#b4b4b4" stroke-width="1"/>
<path d="M9 8 L16 14.6" stroke="#f7c21a" stroke-width="2.6" stroke-linecap="round"/><circle cx="8.4" cy="6.8" r="3.3" fill="#f9c51c"/><circle cx="7.4" cy="5.6" r="0.9" fill="#333"/></svg>
<div class="t" style="left:1203px;top:615.61px;font-size:21.6px;color:#000;font-weight:400;letter-spacing:0.45px;font-family:'Liberation Sans',sans-serif;">2. 172.25.254.101 (root)</div>
<div class="a" style="left:395px;top:658px;width:1831px;height:499px;border:1px solid #5a5a5a"></div>
<div class="a" style="left:2198px;top:661px;width:25px;height:455px;background:#efefef;"></div>
<div class="a" style="left:2208px;top:1047px;width:5px;height:43px;background:#858585;border-radius:3px"></div>
<div class="t" style="left:409px;top:710.32px;font-size:28.3px;color:#000;font-weight:400;letter-spacing:-0.9825px;font-family:'Liberation Mono',monospace;"><span style="color:#a8a800">[2026-02-18 03:41.33]</span><span style="color:#383838">  </span><span style="color:#800080">~</span></div>
<div class="t" style="left:409px;top:740.32px;font-size:28.3px;color:#000;font-weight:400;letter-spacing:-0.9825px;font-family:'Liberation Mono',monospace;"><span style="color:#008080">[Is XiaFeng Computer.IsXiaFengComputer]</span><span style="color:#383838"> </span><span style="color:#383838"> </span><span style="color:#383838"> for i in {1<span style='position:relative;left:3.3px'>.</span><span style='position:relative;left:-3.6px'>.</span>6};do curl </span><span style="color:#800080">172.25.254.100;done</span></div>
<svg class="a" style="left:1050.4px;top:747px;overflow:visible" width="13" height="12" viewBox="0 0 13 12"><path d="M0 0 L12.5 5.5 L0 11.1 L1.6 5.5 Z" fill="#3a3a3a"/></svg>
<div class="t" style="left:409px;top:770.32px;font-size:28.3px;color:#000;font-weight:400;letter-spacing:-0.9825px;font-family:'Liberation Mono',monospace;"><span style="color:#383838">RS2 - </span><span style="color:#800080">192.168.0.30</span></div>
<div class="t" style="left:409px;top:800.32px;font-size:28.3px;color:#000;font-weight:400;letter-spacing:-0.9825px;font-family:'Liberation Mono',monospace;"><span style="color:#383838">RS2 - </span><span style="color:#800080">192.168.0.30</span></div>
<div class="t" style="left:409px;top:830.32px;font-size:28.3px;color:#000;font-weight:400;letter-spacing:-0.9825px;font-family:'Liberation Mono',monospace;"><span style="color:#383838">RS2 - </span><span style="color:#800080">192.168.0.30</span></div>
<div class="t" style="left:409px;top:860.32px;font-size:28.3px;color:#000;font-weight:400;letter-spacing:-0.9825px;font-family:'Liberation Mono',monospace;"><span style="color:#383838">RS2 - </span><span style="color:#800080">192.168.0.30</span></div>
<div class="t" style="left:409px;top:890.32px;font-size:28.3px;color:#000;font-weight:400;letter-spacing:-0.9825px;font-family:'Liberation Mono',monospace;"><span style="color:#383838">RS2 - </span><span style="color:#800080">192.168.0.30</span></div>
<div class="t" style="left:409px;top:920.32px;font-size:28.3px;color:#000;font-weight:400;letter-spacing:-0.9825px;font-family:'Liberation Mono',monospace;"><span style="color:#383838">RS2 - </span><span style="color:#800080">192.168.0.30</span></div>
<svg class="a" style="left:2169px;top:957px;overflow:visible" width="16" height="14" viewBox="0 0 16 14"><path d="M1.2 7.4 Q2.6 6.4 3.9 7.3 L4.6 9.2 Q8 3.6 11.5 1.4 L15 1.1 Q9.6 5.8 5.4 12.6 Q4.2 14 3 13.1 Q1.6 11 1.2 7.4 Z" fill="#10a310"/></svg>
<div class="a" style="left:409px;top:992px;width:1776px;height:2px;background:#333;"></div>
<div class="t" style="left:409px;top:1010.32px;font-size:28.3px;color:#000;font-weight:400;letter-spacing:-0.9825px;font-family:'Liberation Mono',monospace;"><span style="color:#a8a800">[2026-02-18 03:41.42]</span><span style="color:#383838">  </span><span style="color:#800080">~</span></div>
<div class="t" style="left:409px;top:1040.32px;font-size:28.3px;color:#000;font-weight:400;letter-spacing:-0.9825px;font-family:'Liberation Mono',monospace;"><span style="color:#008080">[Is XiaFeng Computer.IsXiaFengComputer]</span></div>
<svg class="a" style="left:1050.4px;top:1047px;overflow:visible" width="13" height="12" viewBox="0 0 13 12"><path d="M0 0 L12.5 5.5 L0 11.1 L1.6 5.5 Z" fill="#3a3a3a"/></svg>
<div class="a" style="left:1081px;top:1038px;width:16px;height:30px;background:#a0a0a0;"></div>
<svg class="a" style="left:1194px;top:1126px;overflow:visible" width="22" height="18" viewBox="0 0 22 18"><rect x="0.6" y="0.6" width="20.8" height="16.8" fill="#333" stroke="#aaa" stroke-width="1.2"/>
<path d="M2.5 2 h3 q2 0 2 2 q0 1.5 -1 2 q1.5 0.5 1.5 2 q0 2.2 -2.2 2.2 h-3.3 z M3.8 3.2 v2.4 h1.6 q1 0 1 -1.2 q0 -1.2 -1 -1.2 z M3.8 6.8 v2.4 h1.8 q1.1 0 1.1 -1.2 q0 -1.2 -1.1 -1.2 z" fill="#e8e8e8" fill-rule="evenodd"/>
<path d="M1 11.5 h3.2 l1.8 2.5 l-1.8 2.5 h-3.2 z" fill="#1ba0d8"/>
<path d="M4.2 11.5 h3.6 l1.8 2.5 l-1.8 2.5 h-3.6 l1.8 -2.5 z" fill="#16c070"/>
<path d="M7.8 11.5 h3.6 l1.8 2.5 l-1.8 2.5 h-3.6 l1.8 -2.5 z" fill="#d8d010"/></svg>
<div class="t" style="left:1219.5px;top:1124.31px;font-size:21.6px;color:#000;font-weight:400;letter-spacing:0.55px;font-family:'Liberation Sans',sans-serif;">9. /home/mobaxterm</div>
<div class="a" style="left:11px;top:1157px;width:2215px;height:2px;background:#7c7c7c;"></div>
<div class="t" style="left:24px;top:1163.22px;font-size:21px;color:#000;font-weight:700;letter-spacing:-0.3px;font-family:'Liberation Sans',sans-serif;">UNREGISTERED VERSION</div>
<div class="t" style="left:295px;top:1164.07px;font-size:20px;color:#000;font-weight:400;letter-spacing:0px;font-family:'Liberation Sans',sans-serif;">-</div>
<div class="t" style="left:314px;top:1164.07px;font-size:20px;color:#000;font-weight:400;letter-spacing:0px;font-family:'Liberation Sans',sans-serif;">Please support MobaXterm by subscribing to the professional edition here:</div>
<div class="t" style="left:990px;top:1163.22px;font-size:21px;color:#0b6ab6;font-weight:400;letter-spacing:0px;font-family:'Liberation Sans',sans-serif;">https://mobaxterm.mobatek.net</div>
<svg class="a" style="left:2199px;top:1163px;overflow:visible" width="22" height="20" viewBox="0 0 22 20"><rect x="0.75" y="0.75" width="20.5" height="14.5" fill="#bde0f8" stroke="#4a6370" stroke-width="1.5"/>
<rect x="0" y="13.5" width="22" height="2.2" fill="#4a6370"/>
<rect x="9.2" y="15.5" width="3.6" height="2.5" fill="#4a6370"/><rect x="4.3" y="17.8" width="13.4" height="2.2" rx="1" fill="#4a6370"/></svg>
</body></html>
